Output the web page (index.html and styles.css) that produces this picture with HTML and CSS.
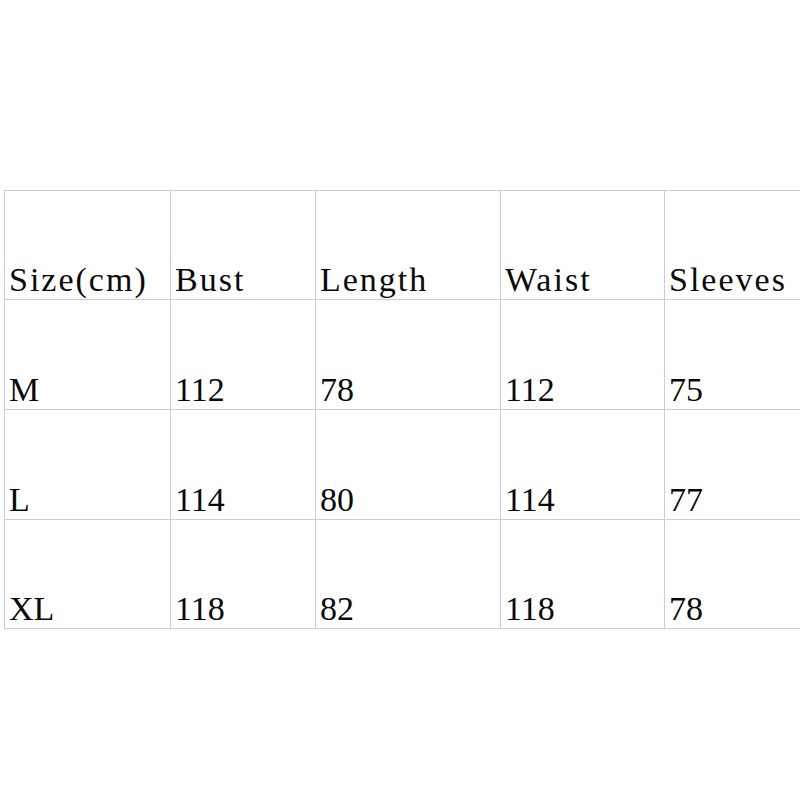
FILE: index.html
```html
<!DOCTYPE html>
<html>
<head>
<meta charset="utf-8">
<link rel="stylesheet" href="styles.css">
</head>
<body>
<div class="wrap">
<table class="size-table">
<colgroup>
<col class="c1"><col class="c2"><col class="c3"><col class="c4"><col class="c5">
</colgroup>
<tr class="r1"><td>Size(cm)</td><td>Bust</td><td>Length</td><td>Waist</td><td>Sleeves</td></tr>
<tr class="r2"><td>M</td><td>112</td><td>78</td><td>112</td><td>75</td></tr>
<tr class="r3"><td>L</td><td>114</td><td>80</td><td>114</td><td>77</td></tr>
<tr class="r4"><td>XL</td><td>118</td><td>82</td><td>118</td><td>78</td></tr>
</table>
</div>
</body>
</html>
```
FILE: styles.css
```css
html, body {
  margin: 0;
  padding: 0;
  background: #ffffff;
}
.wrap {
  width: 800px;
  height: 800px;
  overflow: hidden;
  padding: 190px 0 0 4px;
  box-sizing: border-box;
}
.size-table {
  border-collapse: collapse;
  table-layout: fixed;
  width: 866px;
  font-family: "Liberation Serif", serif;
  font-size: 34px;
  color: #0a0a0a;
}
.c1 { width: 166px; }
.c2 { width: 145px; }
.c3 { width: 185px; }
.c4 { width: 164px; }
.c5 { width: 206px; }
.size-table td {
  border: 1px solid #c8cbe2;
  vertical-align: bottom;
  padding: 0 0 0 4px;
  line-height: normal;
  white-space: nowrap;
}
.r1 td {
  height: 108px;
  letter-spacing: 2px;
}
.r2 td, .r3 td { height: 109px; }
.r4 td { height: 108px; }
```
